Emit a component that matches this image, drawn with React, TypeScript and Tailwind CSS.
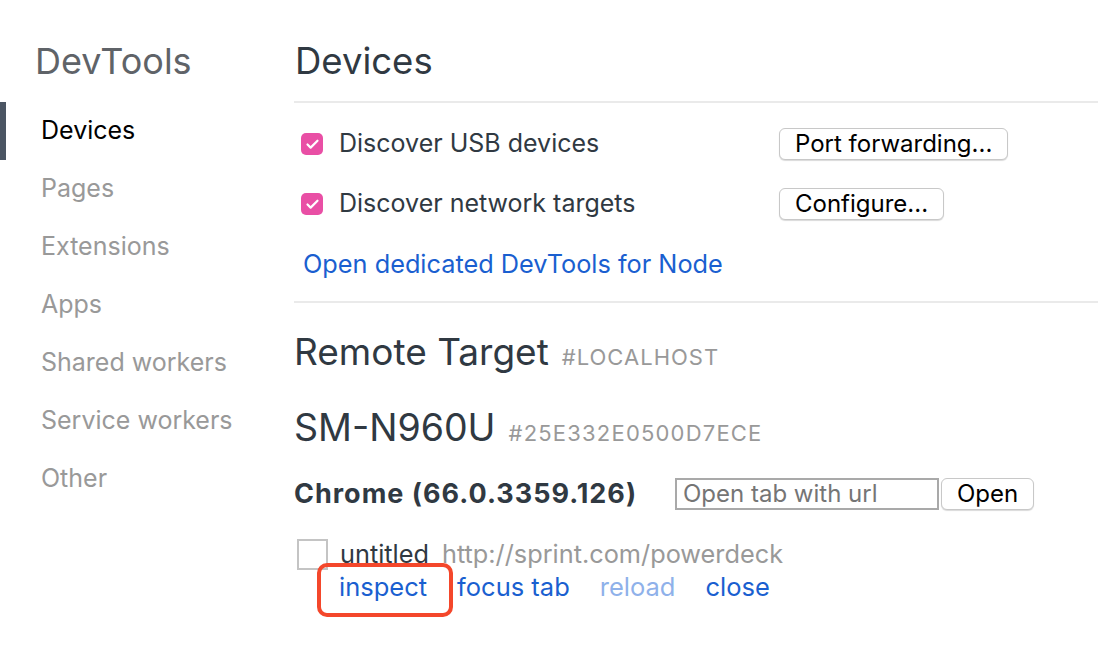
import { Check } from "lucide-react";

const navItems = [
  "Devices",
  "Pages",
  "Extensions",
  "Apps",
  "Shared workers",
  "Service workers",
  "Other",
];

function PinkCheckbox() {
  return (
    <span className="flex h-[22px] w-[22px] shrink-0 items-center justify-center rounded-[5px] bg-[#e94fa5]">
      <Check size={15} strokeWidth={3.5} className="text-white" />
    </span>
  );
}

function MacButton({ label }: { label: string }) {
  return (
    <button className="h-[32px] rounded-[6px] border border-[#c8c8c8] bg-white px-[15px] text-[24px] leading-none text-black shadow-[0_1px_1px_rgba(0,0,0,0.15)]">
      {label}
    </button>
  );
}

export default function App() {
  return (
    <div className="flex h-[648px] w-[1098px] overflow-hidden bg-white font-['Inter',sans-serif] text-[#303942]">
      {/* Sidebar */}
      <aside className="flex w-[294px] shrink-0 flex-col">
        <h1 className="mt-[38px] pl-[35px] text-[36px] leading-[46px] text-[#5f6368]">
          DevTools
        </h1>
        <nav className="mt-[18px] flex flex-col">
          {navItems.map((item, i) => (
            <div
              key={item}
              className={
                i === 0
                  ? "flex h-[58px] items-center border-l-[6px] border-[#4b5563] pl-[35px] text-[25px] text-black"
                  : "flex h-[58px] items-center pl-[41px] text-[25px] text-[#999]"
              }
            >
              {item}
            </div>
          ))}
        </nav>
      </aside>

      {/* Main */}
      <main className="flex flex-1 flex-col">
        <h2 className="mt-[38px] pl-[1px] text-[36.5px] leading-[46px] text-[#303942]">
          Devices
        </h2>
        <div className="mt-[17px] h-[2px] bg-[#eaeaea]" />

        <div className="flex flex-col pl-[7px]">
          <div className="mt-[24px] flex h-[34px] items-center">
            <PinkCheckbox />
            <span className="ml-[16px] w-[440px] text-[25px]">Discover USB devices</span>
            <MacButton label="Port forwarding..." />
          </div>
          <div className="mt-[26px] flex h-[34px] items-center">
            <PinkCheckbox />
            <span className="ml-[16px] w-[440px] text-[25px]">Discover network targets</span>
            <MacButton label="Configure..." />
          </div>
          <a className="mt-[26px] pl-[2px] text-[25.3px] leading-[34px] text-[#1a5fd0]">
            Open dedicated DevTools for Node
          </a>
        </div>
        <div className="mt-[20px] h-[2px] bg-[#eaeaea]" />

        <div className="mt-[26px] flex items-baseline gap-[13px]">
          <span className="text-[37px] leading-[46px]">Remote Target</span>
          <span className="text-[22px] tracking-[1px] uppercase text-[#999]">#LOCALHOST</span>
        </div>

        <div className="mt-[30px] flex items-baseline gap-[13px]">
          <span className="text-[37.5px] leading-[46px]">SM-N960U</span>
          <span className="text-[22px] tracking-[1.2px] text-[#999]">#25E332E0500D7ECE</span>
        </div>

        <div className="mt-[26px] flex items-center">
          <span className="w-[381px] text-[27px] font-bold leading-[34px] tracking-[1px]">
            Chrome (66.0.3359.126)
          </span>
          <input
            readOnly
            placeholder="Open tab with url"
            className="h-[32px] w-[264px] border-2 border-[#a9a9a9] px-[6px] text-[24px] text-black placeholder:text-[#757575] outline-none"
          />
          <span className="ml-[2px]">
            <MacButton label="Open" />
          </span>
        </div>

        <div className="mt-[28px] flex pl-[3px]">
          <div className="h-[31px] w-[31px] shrink-0 border-2 border-[#c4c4c4]" />
          <div className="ml-[12px] flex h-[30px] items-baseline gap-[13px] text-[25.3px] leading-[30px]">
            <span className="text-[#303942]">untitled</span>
            <span className="text-[#999]">http://sprint.com/powerdeck</span>
          </div>
        </div>
        <div className="mt-[2px] ml-[45px] flex items-center gap-[30px] text-[25.5px] leading-[30px]">
          <span className="relative text-[#1a5fd0]">
            inspect
            <span className="absolute -left-[22px] -right-[26px] -top-[9px] -bottom-[15px] rounded-[10px] border-[4px] border-[#f4472b]" />
          </span>
          <span className="text-[#1a5fd0]">focus tab</span>
          <span className="text-[#8fb1ea]">reload</span>
          <span className="text-[#1a5fd0]">close</span>
        </div>
      </main>
    </div>
  );
}
